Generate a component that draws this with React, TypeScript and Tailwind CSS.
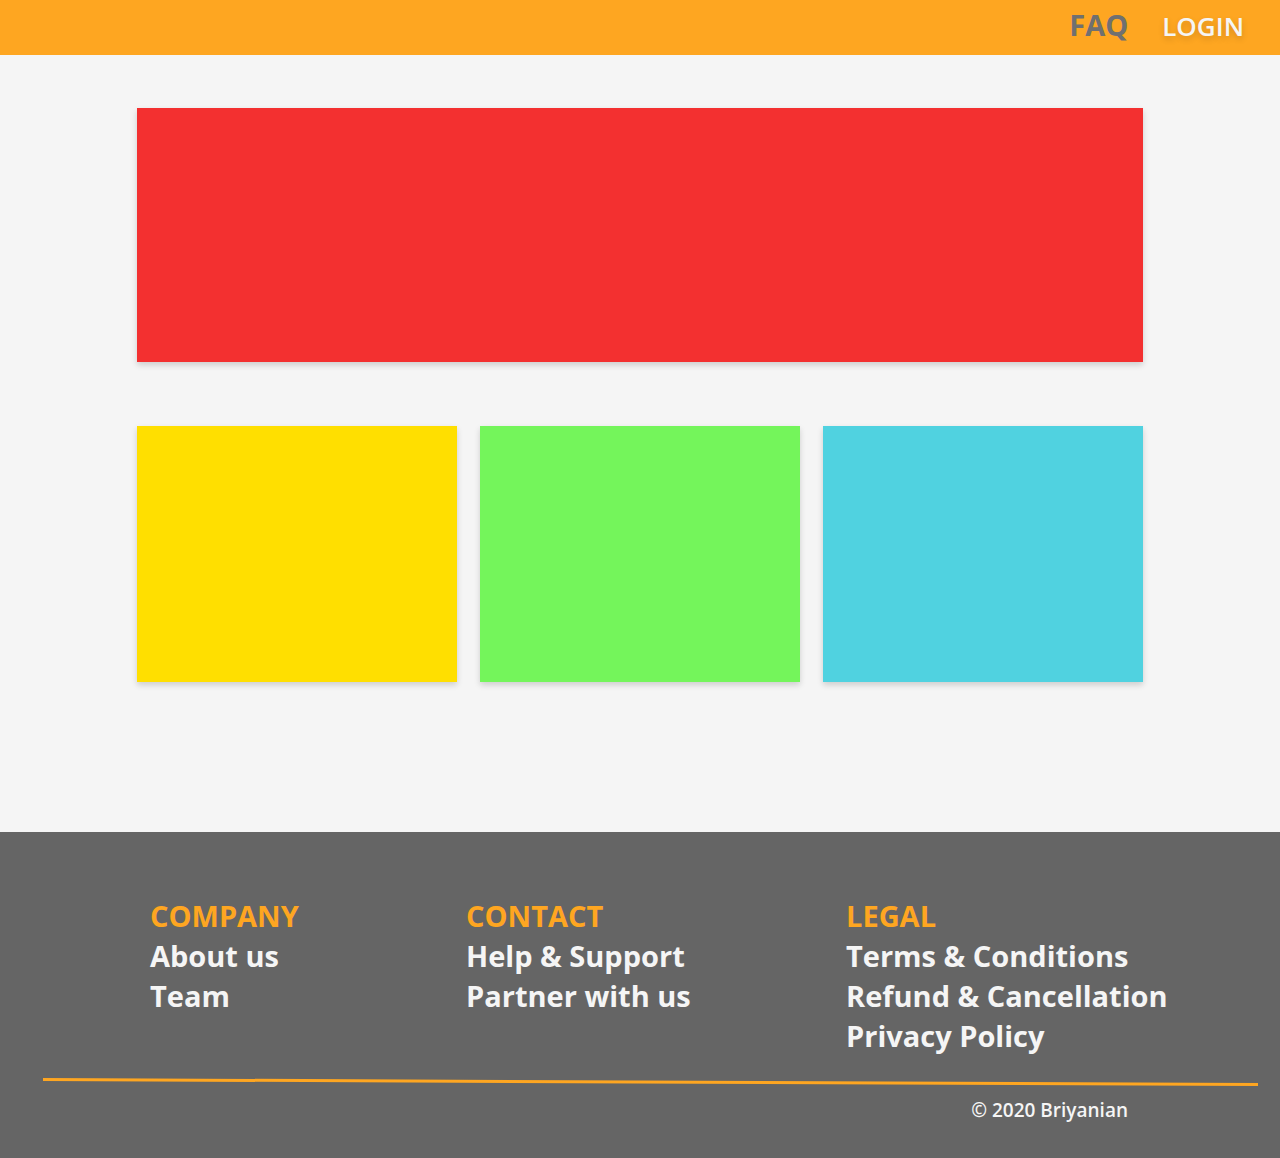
import React from "react";

const columns = [
  { title: "COMPANY", width: "w-[316px]", links: ["About us", "Team"] },
  { title: "CONTACT", width: "w-[380px]", links: ["Help & Support", "Partner with us"] },
  { title: "LEGAL", width: "w-auto", links: ["Terms & Conditions", "Refund & Cancellation", "Privacy Policy"] },
];

export default function App() {
  return (
    <div className="flex min-h-screen flex-col bg-[#f5f5f5] font-['Segoe_UI','Open_Sans',sans-serif]">
      <header className="flex h-[55px] items-center justify-end gap-[34px] bg-[#fea621] pr-9 pb-1">
        <a href="#faq" className="pb-0.5 text-[29px] leading-10 font-bold text-[#707070]">FAQ</a>
        <button type="button" className="text-[26px] leading-10 font-semibold text-[#f5f5f5] [text-shadow:0_3px_6px_rgba(0,0,0,0.16)]">LOGIN</button>
      </header>
      <main className="mx-auto w-full max-w-[1006px] pt-[53px] pb-[150px]">
        <section className="h-[254px] bg-[#f33030] shadow-[0_3px_6px_rgba(0,0,0,0.16)]" />
        <div className="mt-16 grid grid-cols-3 gap-[23px]">
          <section className="h-64 bg-[#ffdf00] shadow-[0_3px_6px_rgba(0,0,0,0.16)]" />
          <section className="h-64 bg-[#74f55b] shadow-[0_3px_6px_rgba(0,0,0,0.16)]" />
          <section className="h-64 bg-[#50d2e0] shadow-[0_3px_6px_rgba(0,0,0,0.16)]" />
        </div>
      </main>
      <footer className="grow bg-[#656565] pt-16 text-[#f5f5f5]">
        <div className="flex pl-[150px] text-[29px] leading-10 font-bold whitespace-nowrap">
          {columns.map((c) => (
            <nav key={c.title} aria-label={c.title} className={c.width}>
              <h2 className="text-[#fea621]">{c.title}</h2>
              <ul>
                {c.links.map((l) => (
                  <li key={l}><a href="#footer">{l}</a></li>
                ))}
              </ul>
            </nav>
          ))}
        </div>
        <svg className="mt-5 block h-3 w-full" viewBox="0 0 1280 12" preserveAspectRatio="none" aria-hidden="true">
          <line x1="43" y1="3.5" x2="1258" y2="8.5" stroke="#fea621" strokeWidth="3" />
        </svg>
        <p className="mt-2 pr-[152px] text-right text-[19px] leading-7 font-semibold">© 2020 Briyanian</p>
      </footer>
    </div>
  );
}
